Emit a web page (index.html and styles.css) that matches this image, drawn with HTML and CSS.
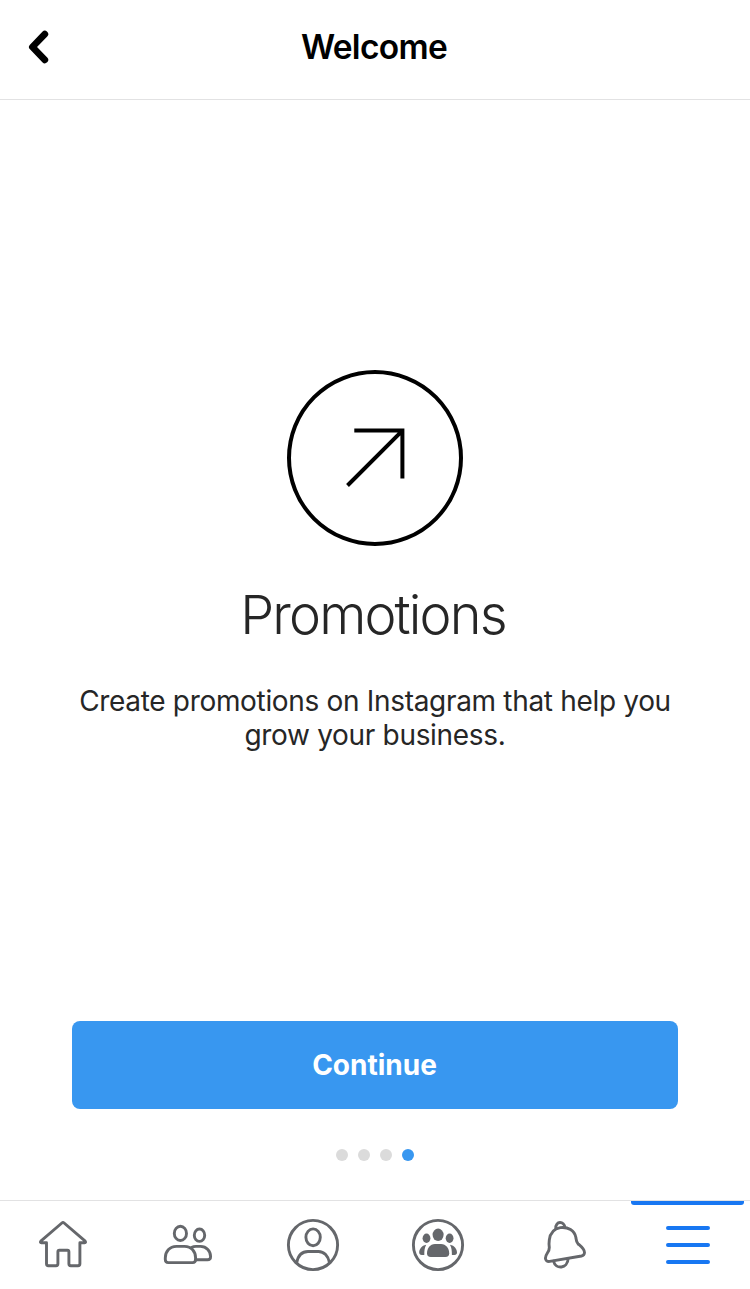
FILE: index.html
```
<!DOCTYPE html>
<html lang="en">
<head>
	<meta charset="UTF-8">
	<title>Welcome</title>
	<link rel="stylesheet" href="styles.css">
</head>
<body>
	<div class="screen">
		<header class="header">
			<a class="back" aria-label="Back">
				<svg width="24" height="36" viewBox="0 0 24 36">
					<path d="M17.8 5.2L5.4 18L17.8 30.8"/>
				</svg>
			</a>
			<h1 class="title">Welcome</h1>
		</header>

		<main class="content">
			<svg class="promo-icon" width="176" height="176" viewBox="0 0 176 176">
				<circle cx="88" cy="88" r="86"/>
				<path d="M67.3 60.6H115.4V108.5M60.5 115.5L115.4 60.6"/>
			</svg>
			<h2 class="heading">Promotions</h2>
			<p class="text">Create promotions on Instagram that help you<br>grow your business.</p>
		</main>

		<div class="footer">
			<button class="continue">Continue</button>
			<div class="dots">
				<span class="dot"></span>
				<span class="dot"></span>
				<span class="dot"></span>
				<span class="dot on"></span>
			</div>
		</div>

		<nav class="tabs">
			<a class="tab">
				<svg class="icon" viewBox="0 0 61 60">
					<path d="M29.9 8Q31 7.1 32.1 8L53.2 26.2Q54.2 27.7 52.6 27.8H47.9V48.8Q47.9 50.7 46 50.7H38.8Q36.9 50.7 36.9 48.8V36.8Q36.9 35.3 35.4 35.3H27.4Q25.9 35.3 25.9 36.8V48.8Q25.9 50.7 24 50.7H16.4Q14.5 50.7 14.5 48.8V27.8H9.4Q7.8 27.7 8.8 26.2Z"/>
				</svg>
			</a>
			<a class="tab">
				<svg class="icon" viewBox="0 0 61 60">
					<ellipse cx="23.4" cy="18.4" rx="6.1" ry="7.1"/>
					<ellipse cx="42.5" cy="20.2" rx="5.2" ry="6.2"/>
					<path d="M19.5 31.4H27.5C34.5 31.4 38.6 36.5 38.6 43V44.6Q38.6 47.6 35.6 47.6H11.3Q8.3 47.6 8.3 44.6V43C8.3 36.5 12.5 31.4 19.5 31.4Z"/>
					<path d="M34.5 32.6Q36.5 31.4 39 31.4H43.5C49.5 31.4 53.6 36 53.6 41.5Q53.6 44.8 50.5 44.8H38.5"/>
				</svg>
			</a>
			<a class="tab">
				<svg class="icon" viewBox="0 0 61 60">
					<circle cx="31" cy="30" r="24.6"/>
					<ellipse cx="31.1" cy="22.3" rx="7.2" ry="8.4"/>
					<path d="M14.7 47.7C16 41 20 36.5 26 36.5H36.5C42 36.5 46.3 41 47.5 47.7"/>
				</svg>
			</a>
			<a class="tab">
				<svg class="icon" viewBox="0 0 61 60">
					<circle cx="31" cy="30" r="24.6"/>
					<g class="solid">
						<ellipse cx="31.1" cy="19.8" rx="5.5" ry="6.2"/>
						<ellipse cx="19.5" cy="23.3" rx="3.9" ry="4.7"/>
						<ellipse cx="42.6" cy="23.3" rx="3.9" ry="4.7"/>
						<path d="M28 29H34C39 29 42.2 33.5 42.2 38.2Q42.2 42 38.4 42H23.8Q20 42 20 38.2C20 33.5 23 29 28 29Z"/>
						<path d="M19.2 29.8C14.5 30.5 12.2 34.5 12.2 37.6Q12.2 40 14.8 40H17.3C17.3 36 17.6 32.5 19.2 29.8Z"/>
						<path d="M43 29.8C47.7 30.5 50 34.5 50 37.6Q50 40 47.4 40H44.9C44.9 36 44.6 32.5 43 29.8Z"/>
					</g>
				</svg>
			</a>
			<a class="tab">
				<svg class="icon" viewBox="0 0 61 60">
					<path d="M28.3 12.6C36 11.6 42.6 15.5 43.9 22.5C44.3 25.5 44.3 27 46 28.8C48.5 31 52.5 33.8 52.5 37.5Q52.4 40.4 49.5 41L17.8 46.4Q13.6 46.8 13.4 43.2C13.4 38.8 17.6 37 17.3 32.5C16.9 30 16.9 28 17.3 25C18.2 18 22.3 13.5 28.3 12.6Z"/>
					<path d="M23.8 13.4C23.2 5.7 32.4 5.7 32.9 12.6"/>
					<path d="M21.6 46.2C23.5 54.6 35.7 53.9 36.1 43.8"/>
				</svg>
			</a>
			<a class="tab active">
				<svg class="icon" viewBox="0 0 61 60">
					<path d="M11 13H51M11 30H51M11 47H51"/>
				</svg>
			</a>
		</nav>
	</div>
</body>
</html>
```
FILE: styles.css
```
body {
	margin: 0;
	background-color: #fff;
	font-family: Inter, "Liberation Sans", sans-serif;
}

.screen {
	display: flex;
	flex-direction: column;
	height: 1289px;
}

.header {
	display: grid;
	grid-template-columns: 80px 1fr 80px;
	align-items: center;
	box-sizing: border-box;
	height: 100px;
	padding-bottom: 5px;
	border-bottom: 1px solid #e2e2e3;
}

.back {
	display: flex;
	padding-left: 27px;
}

.back path {
	fill: none;
	stroke: #000;
	stroke-width: 6.8;
	stroke-linecap: round;
	stroke-linejoin: round;
}

.title {
	margin: 0;
	padding-right: 2px;
	font-size: 33.5px;
	font-weight: 600;
	letter-spacing: -0.7px;
	line-height: 40px;
	text-align: center;
	color: #000;
}

.content {
	display: flex;
	flex: 1;
	flex-direction: column;
	align-items: center;
	padding-top: 270px;
}

.promo-icon {
	fill: none;
	stroke: #000;
	stroke-width: 4;
}

.heading {
	margin: 36px 0 0;
	padding-right: 4px;
	font-size: 54px;
	font-weight: 300;
	letter-spacing: -1.85px;
	line-height: 66px;
	color: #262626;
}

.text {
	margin: 36px 0 0;
	font-size: 28px;
	letter-spacing: -0.32px;
	line-height: 34px;
	text-align: center;
	color: #262626;
}

.footer {
	display: flex;
	flex-direction: column;
	align-items: center;
	gap: 40px;
	padding: 0 72px 39px;
}

.continue {
	width: 100%;
	height: 88px;
	padding: 0 1px 0 0;
	border: none;
	border-radius: 8px;
	background-color: #3897f0;
	font-family: inherit;
	font-size: 28px;
	font-weight: 700;
	color: #fff;
}

.dots {
	display: flex;
	gap: 10px;
}

.dot {
	width: 12px;
	height: 12px;
	border-radius: 50%;
	background-color: #dbdbdb;
}

.dot.on {
	background-color: #3897f0;
}

.tabs {
	display: grid;
	grid-template-columns: repeat(6, 1fr);
	height: 88px;
	border-top: 1px solid #e2e2e3;
}

.tab {
	position: relative;
	display: flex;
	align-items: center;
	justify-content: center;
}

.icon {
	width: 61px;
	height: 60px;
	fill: none;
	stroke: #65676b;
	stroke-width: 2.9;
	stroke-linecap: round;
	stroke-linejoin: round;
}

.solid {
	fill: #65676b;
	stroke: none;
}

.active .icon {
	stroke: #1877f2;
	stroke-width: 4;
}

.active::before {
	content: "";
	position: absolute;
	top: 0;
	left: 6px;
	right: 6px;
	height: 4px;
	border-radius: 0 0 3px 3px;
	background-color: #1877f2;
}
```
